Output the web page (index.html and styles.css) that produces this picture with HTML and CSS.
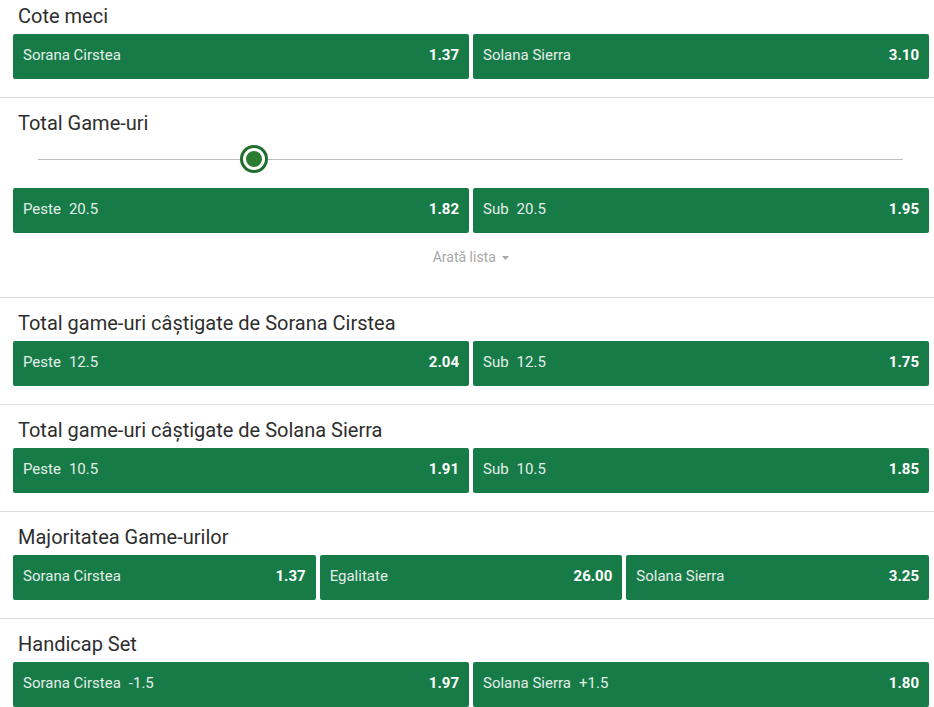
FILE: index.html
```html
<!DOCTYPE html>
<html lang="ro">
<head>
    <meta charset="UTF-8">
    <meta name="viewport" content="width=device-width, initial-scale=1.0">
    <title>Cote meci</title>
    <link rel="stylesheet" href="styles.css">
</head>
<body>
    <div class="markets">
        <div class="market market-first">
            <div class="market-title">Cote meci</div>
            <div class="odds-row">
                <button class="odd"><span class="odd-label">Sorana Cirstea</span><span class="odd-value">1.37</span></button>
                <button class="odd"><span class="odd-label">Solana Sierra</span><span class="odd-value">3.10</span></button>
            </div>
        </div>

        <div class="market market-list">
            <div class="market-title">Total Game-uri</div>
            <div class="slider">
                <div class="slider-track"></div>
                <div class="slider-thumb" style="left: 25%"></div>
            </div>
            <div class="odds-row">
                <button class="odd"><span class="odd-label">Peste<span class="odd-line">20.5</span></span><span class="odd-value">1.82</span></button>
                <button class="odd"><span class="odd-label">Sub<span class="odd-line">20.5</span></span><span class="odd-value">1.95</span></button>
            </div>
            <div class="show-more">Arată lista
                <svg class="caret" width="7" height="4" viewBox="0 0 7 4"><path d="M0 0h7L3.5 4z" fill="#a8a8a8"/></svg>
            </div>
        </div>

        <div class="market">
            <div class="market-title">Total game-uri câștigate de Sorana Cirstea</div>
            <div class="odds-row">
                <button class="odd"><span class="odd-label">Peste<span class="odd-line">12.5</span></span><span class="odd-value">2.04</span></button>
                <button class="odd"><span class="odd-label">Sub<span class="odd-line">12.5</span></span><span class="odd-value">1.75</span></button>
            </div>
        </div>

        <div class="market">
            <div class="market-title">Total game-uri câștigate de Solana Sierra</div>
            <div class="odds-row">
                <button class="odd"><span class="odd-label">Peste<span class="odd-line">10.5</span></span><span class="odd-value">1.91</span></button>
                <button class="odd"><span class="odd-label">Sub<span class="odd-line">10.5</span></span><span class="odd-value">1.85</span></button>
            </div>
        </div>

        <div class="market">
            <div class="market-title">Majoritatea Game-urilor</div>
            <div class="odds-row three">
                <button class="odd"><span class="odd-label">Sorana Cirstea</span><span class="odd-value">1.37</span></button>
                <button class="odd"><span class="odd-label">Egalitate</span><span class="odd-value">26.00</span></button>
                <button class="odd"><span class="odd-label">Solana Sierra</span><span class="odd-value">3.25</span></button>
            </div>
        </div>

        <div class="market">
            <div class="market-title">Handicap Set</div>
            <div class="odds-row">
                <button class="odd"><span class="odd-label">Sorana Cirstea<span class="odd-line">-1.5</span></span><span class="odd-value">1.97</span></button>
                <button class="odd"><span class="odd-label">Solana Sierra<span class="odd-line">+1.5</span></span><span class="odd-value">1.80</span></button>
            </div>
        </div>
    </div>
</body>
</html>
```

FILE: styles.css
```css
body {
    margin: 0;
    font-family: 'Roboto', 'Liberation Sans', sans-serif;
    background: #fff;
    color: #2e2e2e;
}

.market {
    padding: 13px 5px 18px 13px;
    border-bottom: 1px solid #dddddd;
}

.market-first {
    padding-top: 4px;
}

.market-title {
    padding-left: 5px;
    font-size: 20px;
    line-height: 24px;
    margin-bottom: 6px;
    color: #2e2e2e;
}

.odds-row {
    display: grid;
    grid-template-columns: repeat(2, 1fr);
    gap: 4px;
}

.odds-row.three {
    grid-template-columns: repeat(3, 1fr);
}

.odd {
    display: flex;
    align-items: center;
    justify-content: space-between;
    height: 45px;
    padding: 0 10px 3px;
    border: none;
    border-radius: 2px;
    background: #177b48;
    font-family: inherit;
    cursor: pointer;
}

.odd-label {
    font-size: 15px;
    color: #e4eee8;
}

.odd-line {
    margin-left: 8px;
}

.odd-value {
    font-size: 15px;
    font-weight: 700;
    color: #ffffff;
}

/* slider for total game lines */
.slider {
    position: relative;
    height: 28px;
    margin: 10px 26px 15px 25px;
}

.slider-track {
    position: absolute;
    left: 0;
    right: 0;
    top: 14px;
    height: 1px;
    background: #bdbdbd;
}

.slider-thumb {
    position: absolute;
    top: 3px;
    width: 22px;
    height: 22px;
    margin-left: -11px;
    box-sizing: border-box;
    border-radius: 50%;
    border: 3px solid #ffffff;
    background: #2a7d2e;
    box-shadow: 0 0 0 3px #1f6e2b;
}

.show-more {
    padding: 14px 0 12px;
    line-height: 20px;
    text-align: center;
    font-size: 14px;
    color: #a8a8a8;
}

.caret {
    margin-left: 3px;
    vertical-align: middle;
}
```
